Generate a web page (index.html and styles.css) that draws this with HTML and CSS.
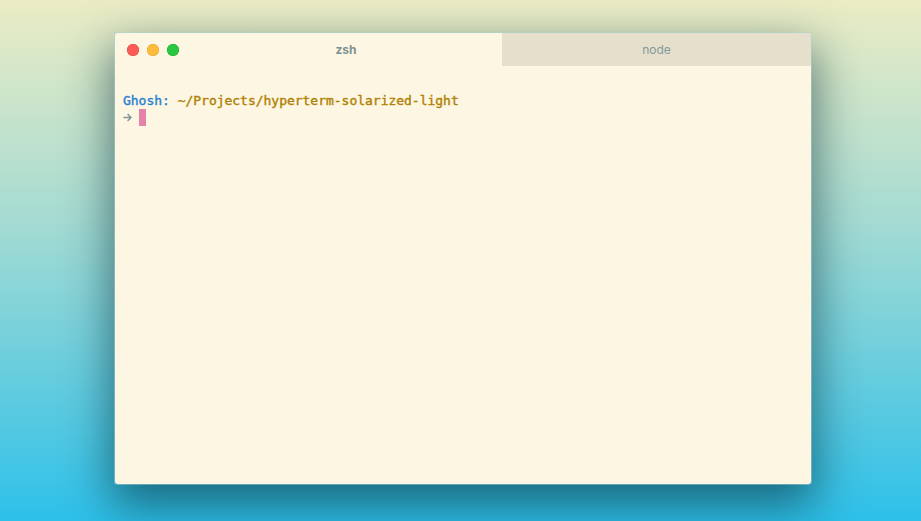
FILE: index.html
```html
<!DOCTYPE html>
<html lang="en">
<head>
<meta charset="utf-8">
<title>Hyperterm</title>
<link rel="stylesheet" href="styles.css">
</head>
<body>
<main class="window">
  <header class="titlebar">
    <div class="traffic">
      <span class="light light-close"></span>
      <span class="light light-min"></span>
      <span class="light light-max"></span>
    </div>
    <div class="tab tab-active">zsh</div>
    <div class="tab tab-inactive">node</div>
  </header>
  <section class="term">
    <div class="line"><span class="user">Ghosh:</span> <span class="path">~/Projects/hyperterm-solarized-light</span></div>
    <div class="line prompt"><svg class="arrow" width="9" height="17" viewBox="0 0 9 17" aria-hidden="true"><path d="M0.5 8.5H8M4.6 5L8 8.5L4.6 12" fill="none" stroke="#7f9499" stroke-width="1.4"/></svg><span class="cursor"></span></div>
  </section>
</main>
</body>
</html>
```
FILE: styles.css
```css
* { box-sizing: border-box; }
html, body { margin: 0; height: 100%; }
body {
  width: 921px;
  height: 521px;
  overflow: hidden;
  padding: 33px 110px 37px 115px;
  background: linear-gradient(180deg, #ebecc4 0%, #a5dbd2 42%, #2dc0e9 100%);
}
.window {
  height: 451px;
  border-radius: 3px;
  background: #fdf6e3;
  box-shadow: 0 0 0 1px rgba(170, 210, 215, .5), 0 18px 46px 4px rgba(0, 40, 50, .58);
}
.titlebar {
  display: flex;
  height: 33px;
  font-family: "Inter", "Liberation Sans", sans-serif;
  font-size: 12px;
  color: #839a9c;
}
.traffic {
  display: flex;
  align-items: center;
  gap: 8px;
  width: 75px;
  padding-left: 12px;
}
.light {
  width: 12px;
  height: 12px;
  border-radius: 50%;
}
.light-close { background: #fc5b57; box-shadow: inset 0 0 0 .5px #e0443e; }
.light-min { background: #ffbb3a; box-shadow: inset 0 0 0 .5px #dea034; }
.light-max { background: #2ac840; box-shadow: inset 0 0 0 .5px #1aab29; }
.tab {
  display: flex;
  align-items: center;
  justify-content: center;
}
.tab-active {
  width: 312px;
  font-weight: 700;
  color: #7d9194;
}
.tab-inactive {
  flex: 1;
  background: #e6dfcb;
  border-radius: 0 3px 0 0;
}
.term {
  padding: 26px 0 0 8px;
  font-family: "DejaVu Sans Mono", monospace;
  font-size: 13px;
  letter-spacing: -0.02px;
  font-weight: 400;
  -webkit-text-stroke: .4px currentColor;
  line-height: 17px;
}
.line { white-space: pre; height: 17px; }
.user { color: #2a82d0; }
.path { color: #b08205; }
.prompt { display: flex; gap: 7px; }
.arrow { flex: none; }
.cursor {
  width: 7px;
  height: 17px;
  background: rgba(211, 54, 130, .6);
}
```
